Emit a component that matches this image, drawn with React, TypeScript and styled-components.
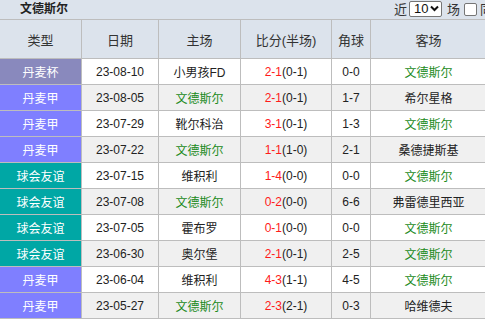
import * as React from 'react';
import styled, { createGlobalStyle } from 'styled-components';

const GlobalStyle = createGlobalStyle`
  body {
    margin: 0;
    background: #ffffff;
    font-family: 'Liberation Sans', 'Noto Sans CJK SC', sans-serif;
  }
`;

type Kind = 'cup' | 'league' | 'friendly';

interface Match {
  kind: Kind;
  type: string;
  date: string;
  home: string;
  score: string;
  half: string;
  corner: string;
  away: string;
}

const TEAM = '文德斯尔';

const matches: Match[] = [
  { kind: 'cup', type: '丹麦杯', date: '23-08-10', home: '小男孩FD', score: '2-1', half: '(0-1)', corner: '0-0', away: TEAM },
  { kind: 'league', type: '丹麦甲', date: '23-08-05', home: TEAM, score: '2-1', half: '(0-1)', corner: '1-7', away: '希尔星格' },
  { kind: 'league', type: '丹麦甲', date: '23-07-29', home: '靴尔科治', score: '3-1', half: '(0-1)', corner: '1-3', away: TEAM },
  { kind: 'league', type: '丹麦甲', date: '23-07-22', home: TEAM, score: '1-1', half: '(1-0)', corner: '2-1', away: '桑德捷斯基' },
  { kind: 'friendly', type: '球会友谊', date: '23-07-15', home: '维积利', score: '1-4', half: '(0-0)', corner: '0-0', away: TEAM },
  { kind: 'friendly', type: '球会友谊', date: '23-07-08', home: TEAM, score: '0-2', half: '(0-0)', corner: '6-6', away: '弗雷德里西亚' },
  { kind: 'friendly', type: '球会友谊', date: '23-07-05', home: '霍布罗', score: '0-1', half: '(0-0)', corner: '0-0', away: TEAM },
  { kind: 'friendly', type: '球会友谊', date: '23-06-30', home: '奥尔堡', score: '2-1', half: '(0-1)', corner: '2-5', away: TEAM },
  { kind: 'league', type: '丹麦甲', date: '23-06-04', home: '维积利', score: '4-3', half: '(1-1)', corner: '4-5', away: TEAM },
  { kind: 'league', type: '丹麦甲', date: '23-05-27', home: TEAM, score: '2-3', half: '(2-1)', corner: '0-3', away: '哈维德夫' },
];

const kindColors: Record<Kind, string> = {
  cup: '#8989bd',
  league: '#7f7fff',
  friendly: '#00a7a5',
};

const Page = styled.div`
  width: 485px;
  height: 320px;
  overflow: hidden;
  background: #ffffff;
`;

const TitleBar = styled.div`
  display: flex;
  align-items: center;
  width: 540px;
  height: 19px;
  background: #dce3ec;
`;

const Title = styled.div`
  flex: 0 0 394px;
  box-sizing: border-box;
  padding-left: 20px;
  font-size: 12px;
  font-weight: bold;
  line-height: 19px;
  color: #222;
`;

const Controls = styled.div`
  display: flex;
  align-items: center;
  font-size: 13px;
  color: #333;
  line-height: 16px;
`;

const Label = styled.span<{ $gap: number }>`
  margin-right: ${(p) => p.$gap}px;
`;

const FakeSelect = styled.div`
  display: flex;
  align-items: center;
  justify-content: space-between;
  width: 33px;
  height: 16px;
  margin-right: 5px;
  padding: 0 2px 0 4px;
  box-sizing: border-box;
  border: 1px solid #767676;
  border-radius: 2px;
  background: #fff;
  font-size: 13px;
  color: #111;
  margin-top: -2px;
`;

const CheckBox = styled.div`
  width: 11px;
  height: 11px;
  margin-right: 3px;
  border: 1px solid #767676;
  border-radius: 2px;
  background: #fff;
`;

const Table = styled.table`
  border-collapse: collapse;
  table-layout: fixed;
  width: 487px;
  margin-left: -1px;
`;

const HeadCell = styled.th`
  height: 38px;
  padding: 0;
  background: #dce3ec;
  border: 1px solid #bdbdbd;
  font-size: 13px;
  font-weight: normal;
  color: #333;
  text-align: center;
`;

const Row = styled.tr<{ $even: boolean }>`
  background: ${(p) => (p.$even ? '#f0f0f0' : '#ffffff')};
`;

const Cell = styled.td<{ $green?: boolean }>`
  height: 25px;
  padding: 0;
  border: 1px solid #bdbdbd;
  font-size: 12px;
  color: ${(p) => (p.$green ? '#1a8a1a' : '#222')};
  text-align: center;
  white-space: nowrap;
`;

const TypeCell = styled(Cell)<{ $kind: Kind }>`
  background: ${(p) => kindColors[p.$kind]};
  color: #ffffff;
`;

const Red = styled.span`
  color: #ff1a1a;
`;

const Chevron = () => (
  <svg width="9" height="7" viewBox="0 0 9 7">
    <path d="M1 1.5 L4.5 5 L8 1.5" fill="none" stroke="#111" strokeWidth="2" />
  </svg>
);

export default function App() {
  return (
    <Page>
      <GlobalStyle />
      <TitleBar>
        <Title>{TEAM}</Title>
        <Controls>
          <Label $gap={2}>近</Label>
          <FakeSelect>
            <span>10</span>
            <Chevron />
          </FakeSelect>
          <Label $gap={4}>场</Label>
          <CheckBox />
          <Label $gap={0}>同主客</Label>
        </Controls>
      </TitleBar>
      <Table>
        <colgroup>
          <col style={{ width: 82 }} />
          <col style={{ width: 77 }} />
          <col style={{ width: 82 }} />
          <col style={{ width: 91 }} />
          <col style={{ width: 39 }} />
          <col style={{ width: 116 }} />
        </colgroup>
        <thead>
          <tr>
            <HeadCell>类型</HeadCell>
            <HeadCell>日期</HeadCell>
            <HeadCell>主场</HeadCell>
            <HeadCell>比分(半场)</HeadCell>
            <HeadCell>角球</HeadCell>
            <HeadCell>客场</HeadCell>
          </tr>
        </thead>
        <tbody>
          {matches.map((m, i) => (
            <Row key={m.date} $even={i % 2 === 1}>
              <TypeCell $kind={m.kind}>{m.type}</TypeCell>
              <Cell>{m.date}</Cell>
              <Cell $green={m.home === TEAM}>{m.home}</Cell>
              <Cell>
                <Red>{m.score}</Red>
                {m.half}
              </Cell>
              <Cell>{m.corner}</Cell>
              <Cell $green={m.away === TEAM}>{m.away}</Cell>
            </Row>
          ))}
        </tbody>
      </Table>
    </Page>
  );
}
